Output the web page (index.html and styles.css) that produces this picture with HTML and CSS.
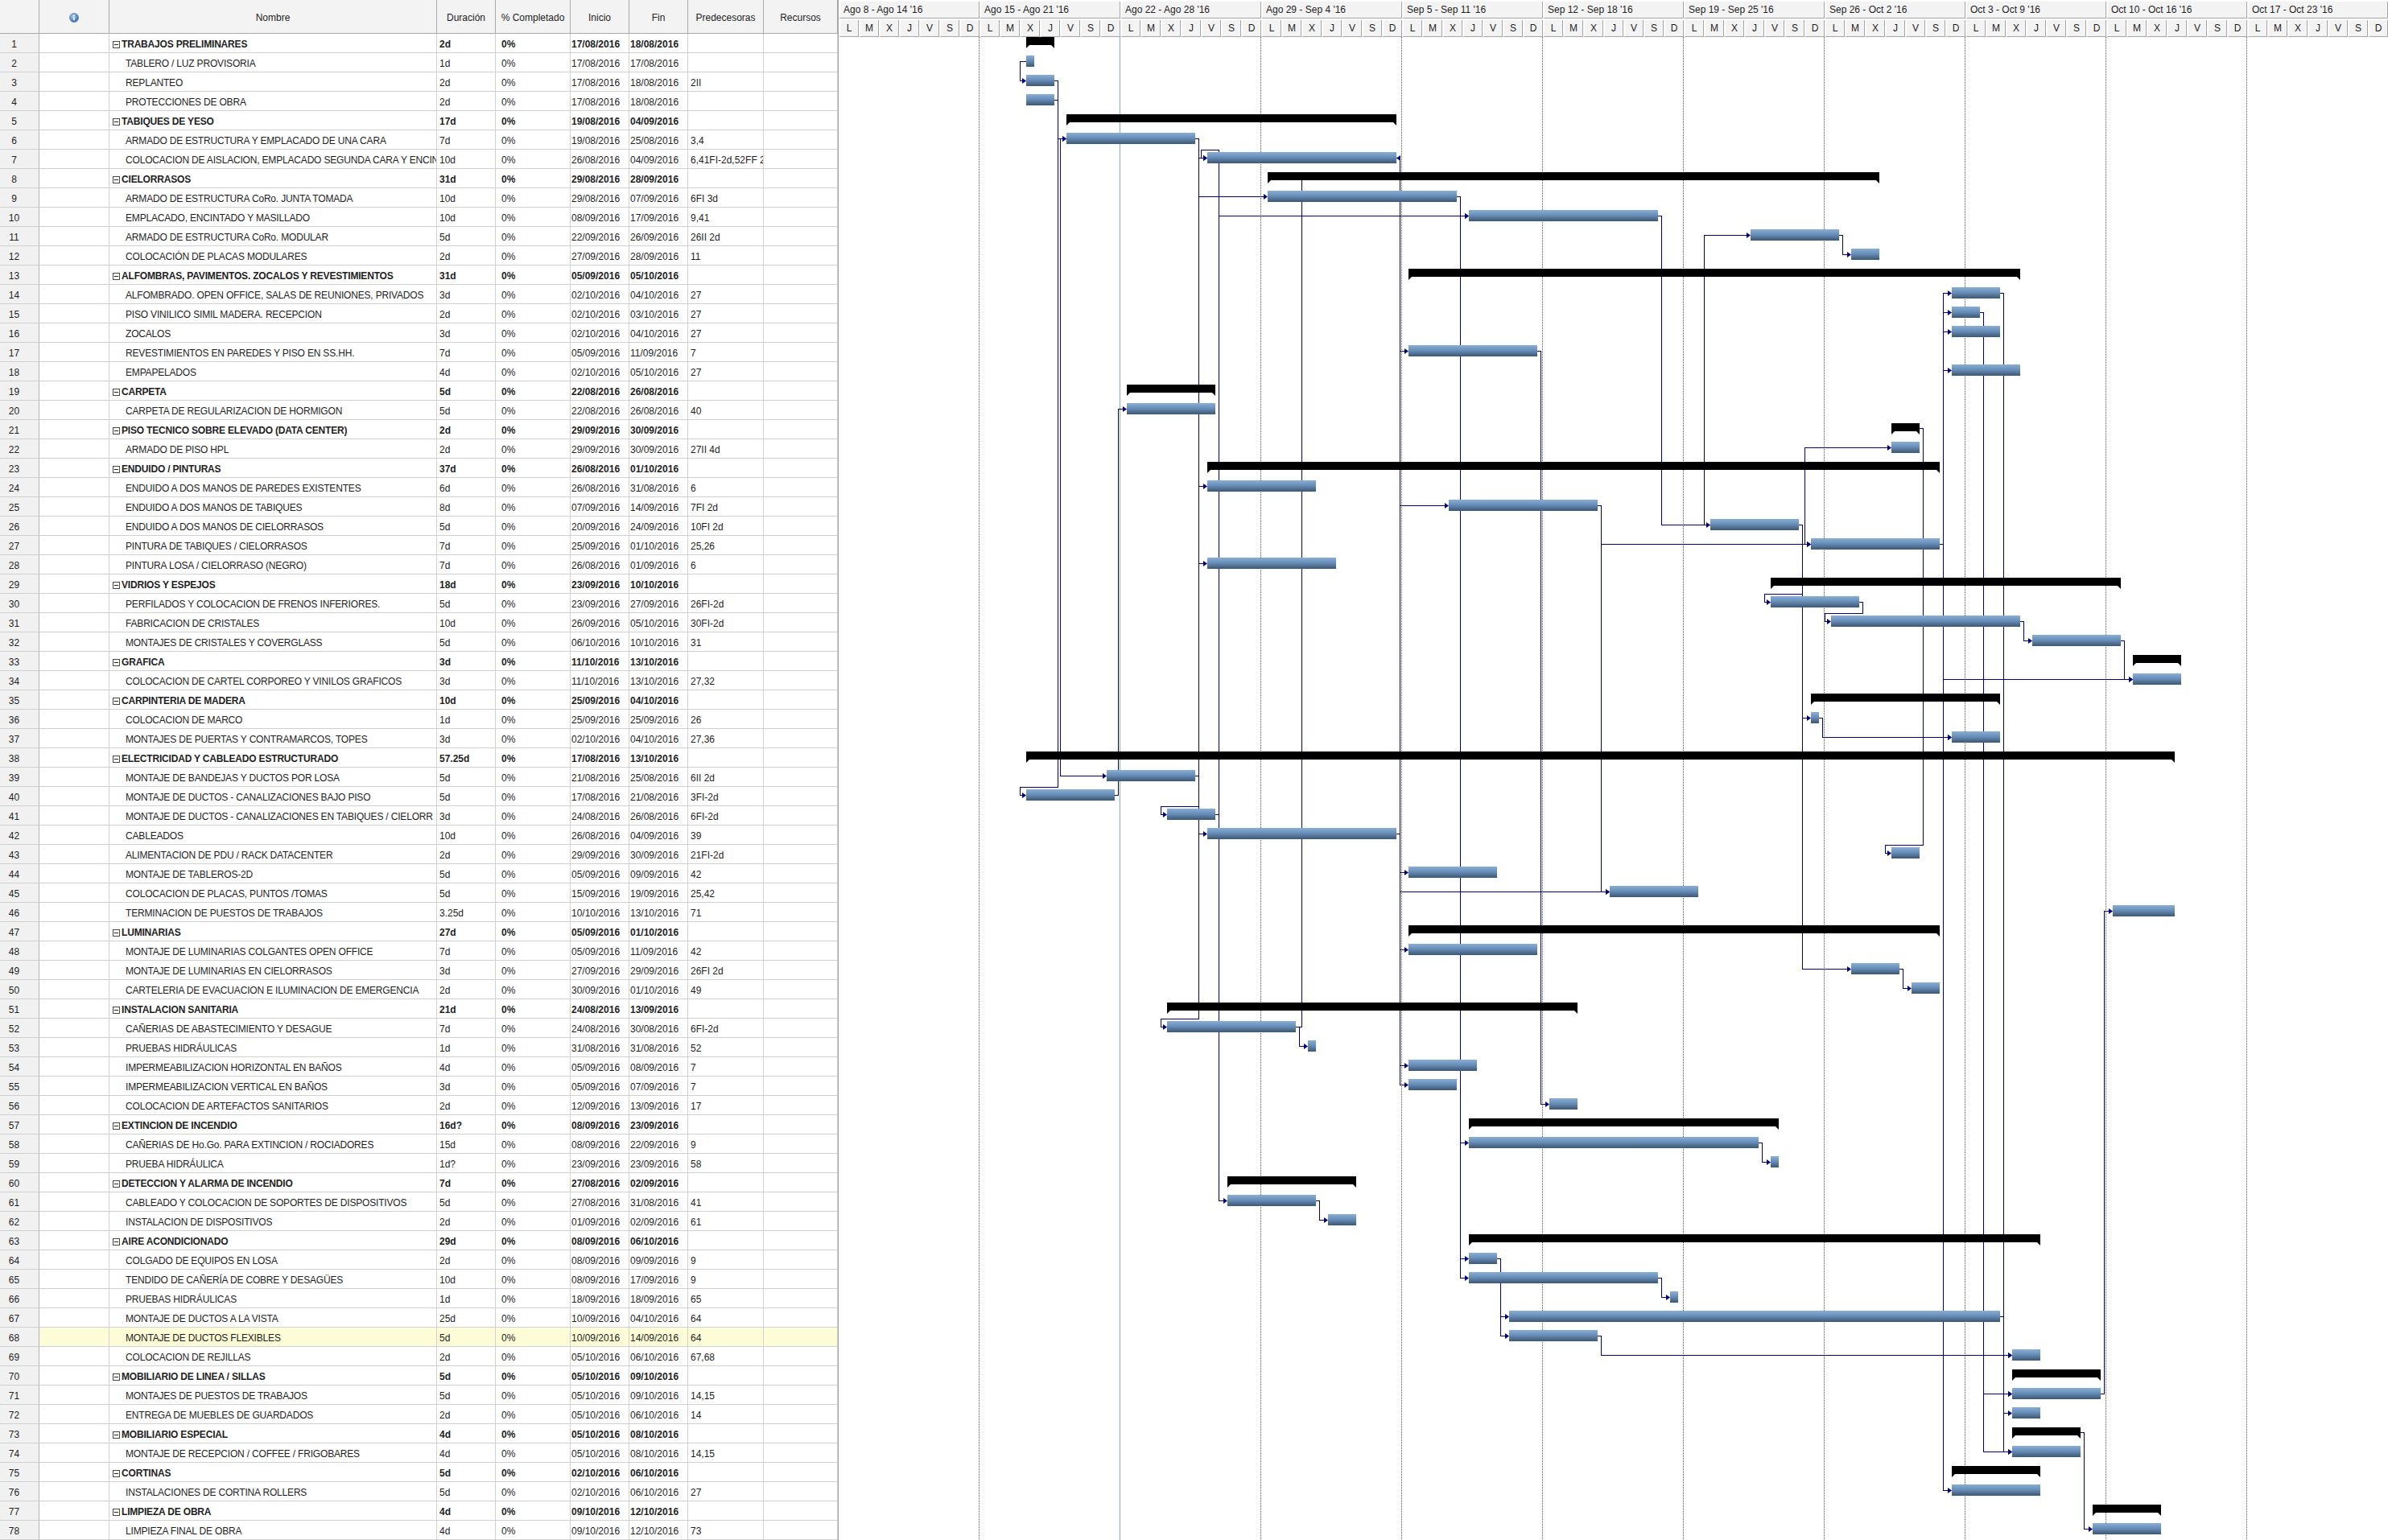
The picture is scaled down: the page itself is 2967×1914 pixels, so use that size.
FILE: index.html
```html
<!DOCTYPE html>
<html lang="es">
<head>
<meta charset="utf-8">
<title>Gantt</title>
<link rel="stylesheet" href="styles.css">
</head>
<body>
<div class="app">
<div class="grid">
<table class="tasks" id="tasks">
<colgroup><col class="k0"><col class="k1"><col class="k2"><col class="k3"><col class="k4"><col class="k5"><col class="k6"><col class="k7"><col class="k8"></colgroup>
<thead><tr><th></th><th><svg class="info" width="12" height="12" viewBox="0 0 12 12"><defs><radialGradient id="ig" cx="40%" cy="35%" r="70%"><stop offset="0" stop-color="#b5d0f2"/><stop offset="1" stop-color="#2a62ad"/></radialGradient></defs><circle cx="6" cy="6" r="5.5" fill="url(#ig)" stroke="#3a6aad" stroke-width="0.6"/><rect x="5.2" y="5" width="1.6" height="4.2" fill="#fff"/><circle cx="6" cy="3.2" r="0.95" fill="#fff"/></svg></th><th>Nombre</th><th>Duración</th><th>% Completado</th><th>Inicio</th><th>Fin</th><th>Predecesoras</th><th>Recursos</th></tr></thead>
<tbody>
<tr class="s"><td>1<td><td><i class="tg"></i>TRABAJOS PRELIMINARES<td>2d<td>0%<td>17/08/2016<td>18/08/2016<td><td>
<tr><td>2<td><td>TABLERO / LUZ PROVISORIA<td>1d<td>0%<td>17/08/2016<td>17/08/2016<td><td>
<tr><td>3<td><td>REPLANTEO<td>2d<td>0%<td>17/08/2016<td>18/08/2016<td>2II<td>
<tr><td>4<td><td>PROTECCIONES DE OBRA<td>2d<td>0%<td>17/08/2016<td>18/08/2016<td><td>
<tr class="s"><td>5<td><td><i class="tg"></i>TABIQUES DE YESO<td>17d<td>0%<td>19/08/2016<td>04/09/2016<td><td>
<tr><td>6<td><td>ARMADO DE ESTRUCTURA Y EMPLACADO DE UNA CARA<td>7d<td>0%<td>19/08/2016<td>25/08/2016<td>3,4<td>
<tr><td>7<td><td>COLOCACION DE AISLACION, EMPLACADO SEGUNDA CARA Y ENCIN<td>10d<td>0%<td>26/08/2016<td>04/09/2016<td>6,41FI-2d,52FF 2<td>
<tr class="s"><td>8<td><td><i class="tg"></i>CIELORRASOS<td>31d<td>0%<td>29/08/2016<td>28/09/2016<td><td>
<tr><td>9<td><td>ARMADO DE ESTRUCTURA CoRo. JUNTA TOMADA<td>10d<td>0%<td>29/08/2016<td>07/09/2016<td>6FI 3d<td>
<tr><td>10<td><td>EMPLACADO, ENCINTADO Y MASILLADO<td>10d<td>0%<td>08/09/2016<td>17/09/2016<td>9,41<td>
<tr><td>11<td><td>ARMADO DE ESTRUCTURA CoRo. MODULAR<td>5d<td>0%<td>22/09/2016<td>26/09/2016<td>26II 2d<td>
<tr><td>12<td><td>COLOCACIÓN DE PLACAS MODULARES<td>2d<td>0%<td>27/09/2016<td>28/09/2016<td>11<td>
<tr class="s"><td>13<td><td><i class="tg"></i>ALFOMBRAS, PAVIMENTOS. ZOCALOS Y REVESTIMIENTOS<td>31d<td>0%<td>05/09/2016<td>05/10/2016<td><td>
<tr><td>14<td><td>ALFOMBRADO. OPEN OFFICE, SALAS DE REUNIONES, PRIVADOS<td>3d<td>0%<td>02/10/2016<td>04/10/2016<td>27<td>
<tr><td>15<td><td>PISO VINILICO SIMIL MADERA. RECEPCION<td>2d<td>0%<td>02/10/2016<td>03/10/2016<td>27<td>
<tr><td>16<td><td>ZOCALOS<td>3d<td>0%<td>02/10/2016<td>04/10/2016<td>27<td>
<tr><td>17<td><td>REVESTIMIENTOS EN PAREDES Y PISO EN SS.HH.<td>7d<td>0%<td>05/09/2016<td>11/09/2016<td>7<td>
<tr><td>18<td><td>EMPAPELADOS<td>4d<td>0%<td>02/10/2016<td>05/10/2016<td>27<td>
<tr class="s"><td>19<td><td><i class="tg"></i>CARPETA<td>5d<td>0%<td>22/08/2016<td>26/08/2016<td><td>
<tr><td>20<td><td>CARPETA DE REGULARIZACION DE HORMIGON<td>5d<td>0%<td>22/08/2016<td>26/08/2016<td>40<td>
<tr class="s"><td>21<td><td><i class="tg"></i>PISO TECNICO SOBRE ELEVADO (DATA CENTER)<td>2d<td>0%<td>29/09/2016<td>30/09/2016<td><td>
<tr><td>22<td><td>ARMADO DE PISO HPL<td>2d<td>0%<td>29/09/2016<td>30/09/2016<td>27II 4d<td>
<tr class="s"><td>23<td><td><i class="tg"></i>ENDUIDO / PINTURAS<td>37d<td>0%<td>26/08/2016<td>01/10/2016<td><td>
<tr><td>24<td><td>ENDUIDO A DOS MANOS DE PAREDES EXISTENTES<td>6d<td>0%<td>26/08/2016<td>31/08/2016<td>6<td>
<tr><td>25<td><td>ENDUIDO A DOS MANOS DE TABIQUES<td>8d<td>0%<td>07/09/2016<td>14/09/2016<td>7FI 2d<td>
<tr><td>26<td><td>ENDUIDO A DOS MANOS DE CIELORRASOS<td>5d<td>0%<td>20/09/2016<td>24/09/2016<td>10FI 2d<td>
<tr><td>27<td><td>PINTURA DE TABIQUES / CIELORRASOS<td>7d<td>0%<td>25/09/2016<td>01/10/2016<td>25,26<td>
<tr><td>28<td><td>PINTURA LOSA / CIELORRASO (NEGRO)<td>7d<td>0%<td>26/08/2016<td>01/09/2016<td>6<td>
<tr class="s"><td>29<td><td><i class="tg"></i>VIDRIOS Y ESPEJOS<td>18d<td>0%<td>23/09/2016<td>10/10/2016<td><td>
<tr><td>30<td><td>PERFILADOS Y COLOCACION DE FRENOS INFERIORES.<td>5d<td>0%<td>23/09/2016<td>27/09/2016<td>26FI-2d<td>
<tr><td>31<td><td>FABRICACION DE CRISTALES<td>10d<td>0%<td>26/09/2016<td>05/10/2016<td>30FI-2d<td>
<tr><td>32<td><td>MONTAJES DE CRISTALES Y COVERGLASS<td>5d<td>0%<td>06/10/2016<td>10/10/2016<td>31<td>
<tr class="s"><td>33<td><td><i class="tg"></i>GRAFICA<td>3d<td>0%<td>11/10/2016<td>13/10/2016<td><td>
<tr><td>34<td><td>COLOCACION DE CARTEL CORPOREO Y VINILOS GRAFICOS<td>3d<td>0%<td>11/10/2016<td>13/10/2016<td>27,32<td>
<tr class="s"><td>35<td><td><i class="tg"></i>CARPINTERIA DE MADERA<td>10d<td>0%<td>25/09/2016<td>04/10/2016<td><td>
<tr><td>36<td><td>COLOCACION DE MARCO<td>1d<td>0%<td>25/09/2016<td>25/09/2016<td>26<td>
<tr><td>37<td><td>MONTAJES DE PUERTAS Y CONTRAMARCOS, TOPES<td>3d<td>0%<td>02/10/2016<td>04/10/2016<td>27,36<td>
<tr class="s"><td>38<td><td><i class="tg"></i>ELECTRICIDAD Y CABLEADO ESTRUCTURADO<td>57.25d<td>0%<td>17/08/2016<td>13/10/2016<td><td>
<tr><td>39<td><td>MONTAJE DE BANDEJAS Y DUCTOS POR LOSA<td>5d<td>0%<td>21/08/2016<td>25/08/2016<td>6II 2d<td>
<tr><td>40<td><td>MONTAJE DE DUCTOS - CANALIZACIONES BAJO PISO<td>5d<td>0%<td>17/08/2016<td>21/08/2016<td>3FI-2d<td>
<tr><td>41<td><td>MONTAJE DE DUCTOS - CANALIZACIONES EN TABIQUES / CIELORR<td>3d<td>0%<td>24/08/2016<td>26/08/2016<td>6FI-2d<td>
<tr><td>42<td><td>CABLEADOS<td>10d<td>0%<td>26/08/2016<td>04/09/2016<td>39<td>
<tr><td>43<td><td>ALIMENTACION DE PDU / RACK DATACENTER<td>2d<td>0%<td>29/09/2016<td>30/09/2016<td>21FI-2d<td>
<tr><td>44<td><td>MONTAJE DE TABLEROS-2D<td>5d<td>0%<td>05/09/2016<td>09/09/2016<td>42<td>
<tr><td>45<td><td>COLOCACION DE PLACAS, PUNTOS /TOMAS<td>5d<td>0%<td>15/09/2016<td>19/09/2016<td>25,42<td>
<tr><td>46<td><td>TERMINACION DE PUESTOS DE TRABAJOS<td>3.25d<td>0%<td>10/10/2016<td>13/10/2016<td>71<td>
<tr class="s"><td>47<td><td><i class="tg"></i>LUMINARIAS<td>27d<td>0%<td>05/09/2016<td>01/10/2016<td><td>
<tr><td>48<td><td>MONTAJE DE LUMINARIAS COLGANTES OPEN OFFICE<td>7d<td>0%<td>05/09/2016<td>11/09/2016<td>42<td>
<tr><td>49<td><td>MONTAJE DE LUMINARIAS EN CIELORRASOS<td>3d<td>0%<td>27/09/2016<td>29/09/2016<td>26FI 2d<td>
<tr><td>50<td><td>CARTELERIA DE EVACUACION E ILUMINACION DE EMERGENCIA<td>2d<td>0%<td>30/09/2016<td>01/10/2016<td>49<td>
<tr class="s"><td>51<td><td><i class="tg"></i>INSTALACION SANITARIA<td>21d<td>0%<td>24/08/2016<td>13/09/2016<td><td>
<tr><td>52<td><td>CAÑERIAS DE ABASTECIMIENTO Y DESAGUE<td>7d<td>0%<td>24/08/2016<td>30/08/2016<td>6FI-2d<td>
<tr><td>53<td><td>PRUEBAS HIDRÁULICAS<td>1d<td>0%<td>31/08/2016<td>31/08/2016<td>52<td>
<tr><td>54<td><td>IMPERMEABILIZACION HORIZONTAL EN BAÑOS<td>4d<td>0%<td>05/09/2016<td>08/09/2016<td>7<td>
<tr><td>55<td><td>IMPERMEABILIZACION VERTICAL EN BAÑOS<td>3d<td>0%<td>05/09/2016<td>07/09/2016<td>7<td>
<tr><td>56<td><td>COLOCACION DE ARTEFACTOS SANITARIOS<td>2d<td>0%<td>12/09/2016<td>13/09/2016<td>17<td>
<tr class="s"><td>57<td><td><i class="tg"></i>EXTINCION DE INCENDIO<td>16d?<td>0%<td>08/09/2016<td>23/09/2016<td><td>
<tr><td>58<td><td>CAÑERIAS DE Ho.Go. PARA EXTINCION / ROCIADORES<td>15d<td>0%<td>08/09/2016<td>22/09/2016<td>9<td>
<tr><td>59<td><td>PRUEBA HIDRÁULICA<td>1d?<td>0%<td>23/09/2016<td>23/09/2016<td>58<td>
<tr class="s"><td>60<td><td><i class="tg"></i>DETECCION Y ALARMA DE INCENDIO<td>7d<td>0%<td>27/08/2016<td>02/09/2016<td><td>
<tr><td>61<td><td>CABLEADO Y COLOCACION DE SOPORTES DE DISPOSITIVOS<td>5d<td>0%<td>27/08/2016<td>31/08/2016<td>41<td>
<tr><td>62<td><td>INSTALACION DE DISPOSITIVOS<td>2d<td>0%<td>01/09/2016<td>02/09/2016<td>61<td>
<tr class="s"><td>63<td><td><i class="tg"></i>AIRE ACONDICIONADO<td>29d<td>0%<td>08/09/2016<td>06/10/2016<td><td>
<tr><td>64<td><td>COLGADO DE EQUIPOS EN LOSA<td>2d<td>0%<td>08/09/2016<td>09/09/2016<td>9<td>
<tr><td>65<td><td>TENDIDO DE CAÑERÍA DE COBRE Y DESAGÜES<td>10d<td>0%<td>08/09/2016<td>17/09/2016<td>9<td>
<tr><td>66<td><td>PRUEBAS HIDRÁULICAS<td>1d<td>0%<td>18/09/2016<td>18/09/2016<td>65<td>
<tr><td>67<td><td>MONTAJE DE DUCTOS A LA VISTA<td>25d<td>0%<td>10/09/2016<td>04/10/2016<td>64<td>
<tr class="sel"><td>68<td><td>MONTAJE DE DUCTOS FLEXIBLES<td>5d<td>0%<td>10/09/2016<td>14/09/2016<td>64<td>
<tr><td>69<td><td>COLOCACION DE REJILLAS<td>2d<td>0%<td>05/10/2016<td>06/10/2016<td>67,68<td>
<tr class="s"><td>70<td><td><i class="tg"></i>MOBILIARIO DE LINEA / SILLAS<td>5d<td>0%<td>05/10/2016<td>09/10/2016<td><td>
<tr><td>71<td><td>MONTAJES DE PUESTOS DE TRABAJOS<td>5d<td>0%<td>05/10/2016<td>09/10/2016<td>14,15<td>
<tr><td>72<td><td>ENTREGA DE MUEBLES DE GUARDADOS<td>2d<td>0%<td>05/10/2016<td>06/10/2016<td>14<td>
<tr class="s"><td>73<td><td><i class="tg"></i>MOBILIARIO ESPECIAL<td>4d<td>0%<td>05/10/2016<td>08/10/2016<td><td>
<tr><td>74<td><td>MONTAJE DE RECEPCION / COFFEE / FRIGOBARES<td>4d<td>0%<td>05/10/2016<td>08/10/2016<td>14,15<td>
<tr class="s"><td>75<td><td><i class="tg"></i>CORTINAS<td>5d<td>0%<td>02/10/2016<td>06/10/2016<td><td>
<tr><td>76<td><td>INSTALACIONES DE CORTINA ROLLERS<td>5d<td>0%<td>02/10/2016<td>06/10/2016<td>27<td>
<tr class="s"><td>77<td><td><i class="tg"></i>LIMPIEZA DE OBRA<td>4d<td>0%<td>09/10/2016<td>12/10/2016<td><td>
<tr><td>78<td><td>LIMPIEZA FINAL DE OBRA<td>4d<td>0%<td>09/10/2016<td>12/10/2016<td>73<td>
</tbody>
</table>
</div>
<div class="split"></div>
<div class="gantt">
<div class="gh">
<div class="gh-w"><div>Ago 8 - Ago 14 '16</div><div>Ago 15 - Ago 21 '16</div><div>Ago 22 - Ago 28 '16</div><div>Ago 29 - Sep 4 '16</div><div>Sep 5 - Sep 11 '16</div><div>Sep 12 - Sep 18 '16</div><div>Sep 19 - Sep 25 '16</div><div>Sep 26 - Oct 2 '16</div><div>Oct 3 - Oct 9 '16</div><div>Oct 10 - Oct 16 '16</div><div>Oct 17 - Oct 23 '16</div></div>
<div class="gh-d"><i>L</i><i>M</i><i>X</i><i>J</i><i>V</i><i>S</i><i>D</i><i>L</i><i>M</i><i>X</i><i>J</i><i>V</i><i>S</i><i>D</i><i>L</i><i>M</i><i>X</i><i>J</i><i>V</i><i>S</i><i>D</i><i>L</i><i>M</i><i>X</i><i>J</i><i>V</i><i>S</i><i>D</i><i>L</i><i>M</i><i>X</i><i>J</i><i>V</i><i>S</i><i>D</i><i>L</i><i>M</i><i>X</i><i>J</i><i>V</i><i>S</i><i>D</i><i>L</i><i>M</i><i>X</i><i>J</i><i>V</i><i>S</i><i>D</i><i>L</i><i>M</i><i>X</i><i>J</i><i>V</i><i>S</i><i>D</i><i>L</i><i>M</i><i>X</i><i>J</i><i>V</i><i>S</i><i>D</i><i>L</i><i>M</i><i>X</i><i>J</i><i>V</i><i>S</i><i>D</i><i>L</i><i>M</i><i>X</i><i>J</i><i>V</i><i>S</i><i>D</i></div>
</div>
<svg id="chart" class="chart" width="1925" height="1868" viewBox="0 4 1925 1868"></svg>
</div>
</div>
<script src="app.js"></script>
</body>
</html>
```
FILE: styles.css
```css
html, body { margin: 0; padding: 0; }
body {
  font-family: "Liberation Sans", Arial, sans-serif;
  font-size: 12px;
  color: #1e1e1e;
  background: #fff;
}
.app { display: flex; width: 2967px; height: 1914px; overflow: hidden; }
.grid { flex: none; width: 1041px; }
.split { flex: none; width: 1px; background: #a3a3a3; }
.gantt { flex: none; width: 1925px; display: flex; flex-direction: column; }

/* task table */
.tasks { table-layout: fixed; width: 1041px; border-collapse: separate; border-spacing: 0; }
.tasks .k0 { width: 49px; }
.tasks .k1 { width: 87px; }
.tasks .k2 { width: 407px; }
.tasks .k3 { width: 73px; }
.tasks .k4 { width: 93px; }
.tasks .k5 { width: 73px; }
.tasks .k6 { width: 73px; }
.tasks .k7 { width: 94px; }
.tasks .k8 { width: 92px; }
.tasks th {
  padding: 3px 0 0;
  line-height: 38px;
  font-weight: normal;
  text-align: center;
  vertical-align: top;
  background: #f3f3f3;
  border-right: 1px solid #a9a9a9;
  border-bottom: 1px solid #a9a9a9;
  white-space: nowrap;
  overflow: hidden;
}
.tasks th .info { vertical-align: -2px; }
.tasks td {
  padding: 3px 3px 0;
  line-height: 20px;
  vertical-align: top;
  border-right: 1px solid #d0d0d0;
  border-bottom: 1px solid #d0d0d0;
  white-space: nowrap;
  overflow: hidden;
  text-overflow: clip;
}
.tasks td:first-child {
  background: #f1f1f1;
  text-align: center;
  padding: 3px 13px 0 0;
  border-right-color: #b4b4b4;
  border-bottom-color: #cecece;
}
.tasks td:nth-child(3) { padding-left: 20px; padding-right: 0; letter-spacing: -0.18px; }
.tasks tr.s td:nth-child(3) { padding-left: 4px; }
.tasks td:nth-child(5) { padding-left: 7px; }
.tasks td:nth-child(6), .tasks td:nth-child(7) { padding-left: 1px; }
.tasks td:nth-child(8) { padding-right: 0; }
.tasks tr.s td { font-weight: bold; }
.tasks tr.s td:first-child { font-weight: normal; }
.tasks tr.sel td { background: #fcfcd6; }
.tasks tr.sel td:first-child { background: #f1f1f1; }
.tg {
  display: inline-block;
  width: 9px;
  height: 9px;
  box-sizing: border-box;
  border: 1px solid #4a4a4a;
  margin-right: 2px;
  vertical-align: -1px;
  background: linear-gradient(#222, #222) center / 5px 1px no-repeat;
}

/* gantt header */
.gh { flex: none; height: 46px; background: #fff; }
.gh-w, .gh-d { display: flex; height: 23px; padding-top: 2px; box-sizing: border-box; }
.gh-w div {
  flex: none;
  width: 175px;
  height: 21px;
  box-sizing: border-box;
  border-left: 2px solid #fff;
  border-right: 1px solid #a6a6a6;
  border-bottom: 1px solid #a6a6a6;
  background: #f3f3f3;
  padding-left: 4px;
  line-height: 20px;
  white-space: nowrap;
  overflow: hidden;
}
.gh-d i {
  font-style: normal;
  flex: none;
  width: 25px;
  height: 21px;
  box-sizing: border-box;
  border-left: 2px solid #fff;
  border-right: 1px solid #a6a6a6;
  border-bottom: 1px solid #a6a6a6;
  background: #f3f3f3;
  text-align: center;
  line-height: 20px;
}

/* gantt chart canvas */
.chart { display: block; flex: none; }
.chart .wk { stroke: #555; stroke-width: 1; stroke-dasharray: 1 1; shape-rendering: crispEdges; }
.chart .today { stroke: #79aadd; stroke-width: 1; shape-rendering: crispEdges; }
.chart .lk path { fill: none; stroke: #000080; stroke-width: 1; shape-rendering: crispEdges; }
.chart .ar { fill: #000080; }
.chart .tb { fill: url(#bgr); shape-rendering: crispEdges; }
.chart .sb { fill: #000; }
.chart rect.sb { shape-rendering: crispEdges; }
```
FILE: app.js
```js
(function () {
  var svg = document.getElementById('chart');
  var rows = document.querySelectorAll('#tasks tbody tr');
  function di(s) {
    var p = s.trim().split('/');
    var d = +p[0], m = +p[1];
    return m === 8 ? d - 8 : (m === 9 ? d + 23 : d + 53);
  }
  var T = [];
  for (var i = 0; i < rows.length; i++) {
    var c = rows[i].cells;
    var h = /\.25d/.test(c[3].textContent) ? 10 : 17;
    T.push({
      x1: Math.round(di(c[5].textContent) * 25 + 25 / 3),
      x2: Math.round(di(c[6].textContent) * 25 + h * 25 / 24),
      top: i * 24,
      sum: rows[i].classList.contains('s')
    });
  }
  var L = [[2,3,'SS'],[3,6],[4,6],[6,7],[41,7],[52,7,'FF'],[6,9],[9,10],[41,10],[26,11,'SS'],[11,12],
    [27,14],[27,15],[27,16],[27,18],[7,17],[40,20],[27,22,'SS'],[6,24],[7,25],[10,26],[25,27],[26,27],
    [6,28],[26,30],[30,31],[31,32],[27,34],[32,34],[26,36],[27,37],[36,37],[6,39,'SS'],[3,40],[6,41],
    [39,42],[21,43],[42,44],[25,45],[42,45],[71,46],[42,48],[26,49],[49,50],[6,52],[52,53],[7,54],
    [7,55],[17,56],[9,58],[58,59],[41,61],[61,62],[9,64],[9,65],[65,66],[64,67],[64,68],[67,69],
    [68,69],[14,71],[15,71],[14,72],[14,74],[15,74],[27,76],[73,78]];

  function arR(x, y) { return '<polygon class="ar" points="' + (x - 5) + ',' + (y - 3.5) + ' ' + x + ',' + y + ' ' + (x - 5) + ',' + (y + 3.5) + '"/>'; }
  function arL(x, y) { return '<polygon class="ar" points="' + (x + 5) + ',' + (y - 3.5) + ' ' + x + ',' + y + ' ' + (x + 5) + ',' + (y + 3.5) + '"/>'; }

  var out = '<defs><linearGradient id="bgr" x1="0" y1="0" x2="0" y2="1">' +
    '<stop offset="0" stop-color="#88aed8"/><stop offset="0.45" stop-color="#6a8fb8"/><stop offset="1" stop-color="#3c5776"/>' +
    '</linearGradient></defs>';
  for (var k = 1; k <= 10; k++) {
    if (k === 2) continue;
    out += '<line class="wk" x1="' + (175 * k - 0.5) + '" y1="4" x2="' + (175 * k - 0.5) + '" y2="1872"/>';
  }
  out += '<line class="today" x1="349.5" y1="4" x2="349.5" y2="1872"/>';

  var paths = '', arrows = '';
  L.forEach(function (l) {
    var p = T[l[0] - 1], s = T[l[1] - 1], t = l[2];
    var yp = p.top + 10.5, ys = s.top + 10.5, d;
    if (t === 'SS') {
      var vx = Math.min(p.x1, s.x1) - 7.5;
      d = 'M' + p.x1 + ' ' + yp + 'H' + vx + 'V' + ys + 'H' + (s.x1 - 4);
      arrows += arR(s.x1, ys);
    } else if (t === 'FF') {
      d = 'M' + p.x2 + ' ' + yp + 'H' + (p.x2 + 7.5) + 'V' + (s.top + 34.5) + 'H' + (s.x2 + 4.5) + 'V' + ys + 'H' + (s.x2 + 4);
      arrows += arL(s.x2, ys);
    } else {
      var vx2 = p.x2 + 4.5;
      if (s.x1 >= p.x2 + 10) {
        d = 'M' + p.x2 + ' ' + yp + 'H' + vx2 + 'V' + ys + 'H' + (s.x1 - 4);
      } else {
        var yh = s.top + 0.5;
        d = 'M' + p.x2 + ' ' + yp + 'H' + vx2 + 'V' + yh + 'H' + (s.x1 - 7.5) + 'V' + ys + 'H' + (s.x1 - 4);
      }
      arrows += arR(s.x1, ys);
    }
    paths += '<path d="' + d + '"/>';
  });

  var bars = '';
  T.forEach(function (t) {
    if (t.sum) {
      var y = t.top + 4;
      bars += '<rect class="sb" x="' + t.x1 + '" y="' + y + '" width="' + (t.x2 - t.x1) + '" height="10"/>' +
        '<polygon class="sb" points="' + t.x1 + ',' + (y + 10) + ' ' + (t.x1 + 4) + ',' + (y + 10) + ' ' + t.x1 + ',' + (y + 14) + '"/>' +
        '<polygon class="sb" points="' + t.x2 + ',' + (y + 10) + ' ' + (t.x2 - 4) + ',' + (y + 10) + ' ' + t.x2 + ',' + (y + 14) + '"/>';
    } else {
      bars += '<rect class="tb" x="' + t.x1 + '" y="' + (t.top + 3) + '" width="' + Math.max(t.x2 - t.x1, 1) + '" height="14"/>';
    }
  });

  svg.innerHTML = out + '<g class="lk">' + paths + '</g>' + arrows + bars;
})();
```
